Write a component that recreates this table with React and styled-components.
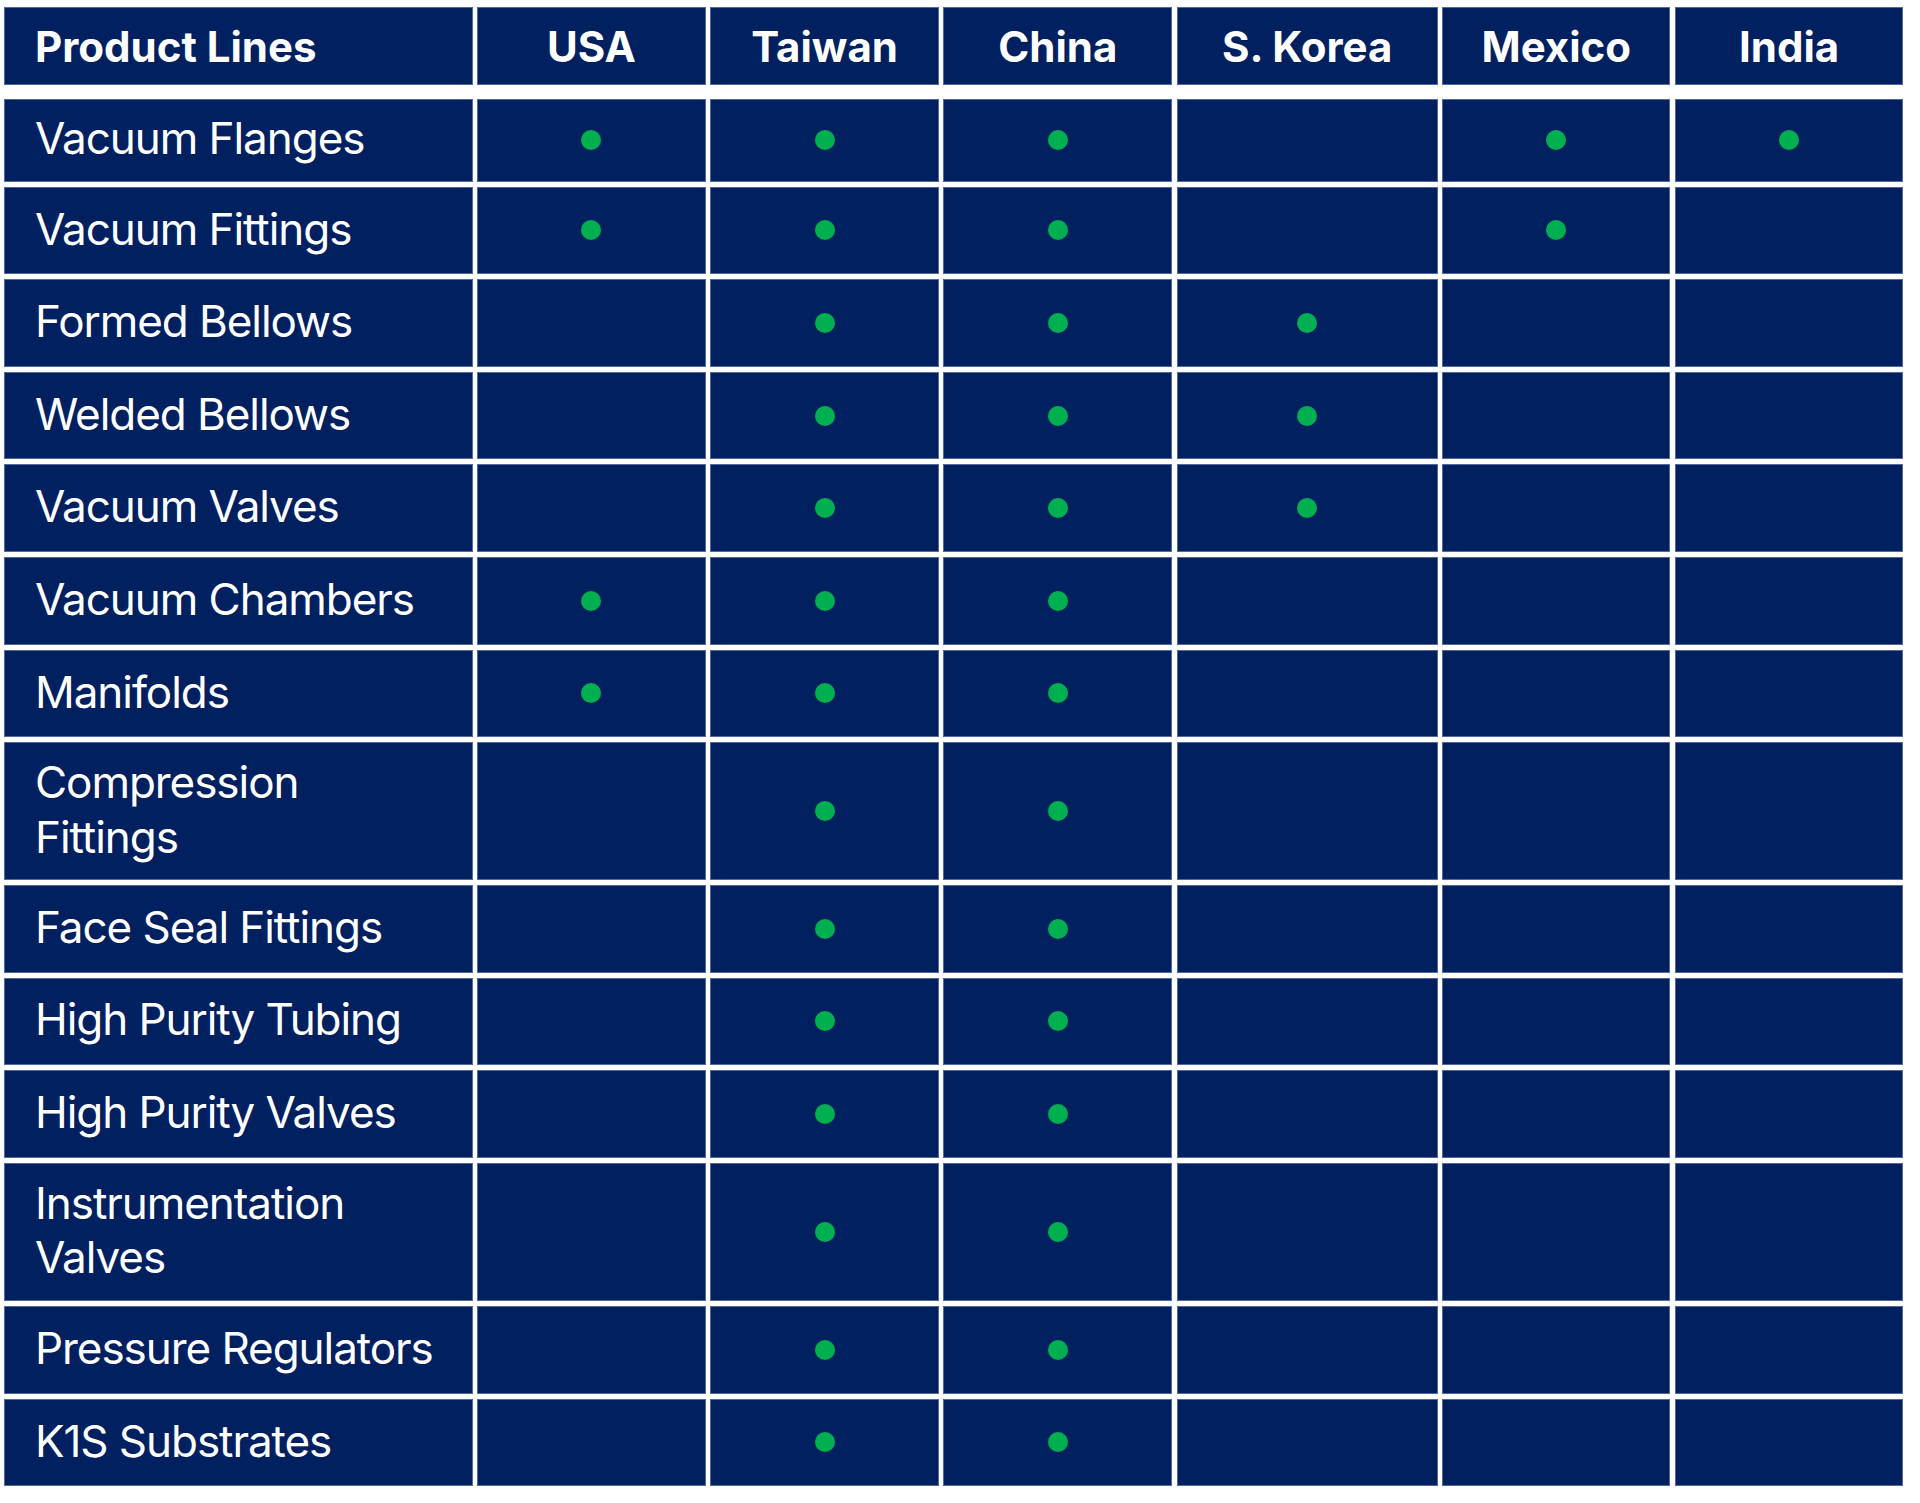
import React from 'react';
import styled, { createGlobalStyle } from 'styled-components';

const GlobalStyle = createGlobalStyle`
  html, body {
    margin: 0;
    padding: 0;
    background: #ffffff;
  }
  body {
    font-family: Inter, "Open Sans", "Liberation Sans", sans-serif;
  }
`;

const COUNTRIES = ['USA', 'Taiwan', 'China', 'S. Korea', 'Mexico', 'India'];

// 1 = made in that country
const PRODUCTS = [
  { name: 'Vacuum Flanges', marks: [1, 1, 1, 0, 1, 1], height: 83 },
  { name: 'Vacuum Fittings', marks: [1, 1, 1, 0, 1, 0] },
  { name: 'Formed Bellows', marks: [0, 1, 1, 1, 0, 0] },
  { name: 'Welded Bellows', marks: [0, 1, 1, 1, 0, 0] },
  { name: 'Vacuum Valves', marks: [0, 1, 1, 1, 0, 0] },
  { name: 'Vacuum Chambers', marks: [1, 1, 1, 0, 0, 0] },
  { name: 'Manifolds', marks: [1, 1, 1, 0, 0, 0] },
  { name: 'Compression\nFittings', marks: [0, 1, 1, 0, 0, 0], height: 137.7 },
  { name: 'Face Seal Fittings', marks: [0, 1, 1, 0, 0, 0] },
  { name: 'High Purity Tubing', marks: [0, 1, 1, 0, 0, 0] },
  { name: 'High Purity Valves', marks: [0, 1, 1, 0, 0, 0] },
  { name: 'Instrumentation\nValves', marks: [0, 1, 1, 0, 0, 0], height: 138.3 },
  { name: 'Pressure Regulators', marks: [0, 1, 1, 0, 0, 0] },
  { name: 'K1S Substrates', marks: [0, 1, 1, 0, 0, 0] },
];

const Table = styled.div`
  display: flex;
  flex-direction: column;
  gap: 5px;
  width: 1899px;
  padding: 7px 0 17px 4px;
`;

const Row = styled.div`
  display: grid;
  grid-template-columns: 468.7px 228.6px 228.6px 228.8px 261px 228.3px 228.3px;
  column-gap: 4.5px;
  height: ${(p) => p.$height}px;
`;

const HeaderRow = styled(Row)`
  margin-bottom: 8.7px;
`;

const Cell = styled.div`
  background: #002060;
  box-shadow: inset 0 0 0 1px rgba(150, 165, 200, 0.55);
  display: flex;
  align-items: center;
  justify-content: center;
  color: #ffffff;
`;

const HeadCell = styled(Cell)`
  font-size: 42px;
  font-weight: 700;
  justify-content: ${(p) => (p.$left ? 'flex-start' : 'center')};
  padding-left: ${(p) => (p.$left ? '31px' : '0')};
`;

const LabelCell = styled(Cell)`
  justify-content: flex-start;
  padding: 0 20px 3px 31px;
  font-size: 44px;
  font-weight: 400;
  letter-spacing: -1.05px;
  line-height: 54.7px;
  white-space: pre;
`;

const Dot = styled.span`
  width: 20px;
  height: 20px;
  border-radius: 50%;
  background: #00b050;
`;

const App = () => {
  return (
    <>
      <GlobalStyle />
      <Table>
        <HeaderRow $height={78}>
          <HeadCell $left>Product Lines</HeadCell>
          {COUNTRIES.map((c) => (
            <HeadCell key={c}>{c}</HeadCell>
          ))}
        </HeaderRow>
        {PRODUCTS.map((p) => (
          <Row key={p.name} $height={p.height || 87.6}>
            <LabelCell>{p.name}</LabelCell>
            {p.marks.map((m, i) => (
              <Cell key={i}>{m ? <Dot /> : null}</Cell>
            ))}
          </Row>
        ))}
      </Table>
    </>
  );
};

export default App;
